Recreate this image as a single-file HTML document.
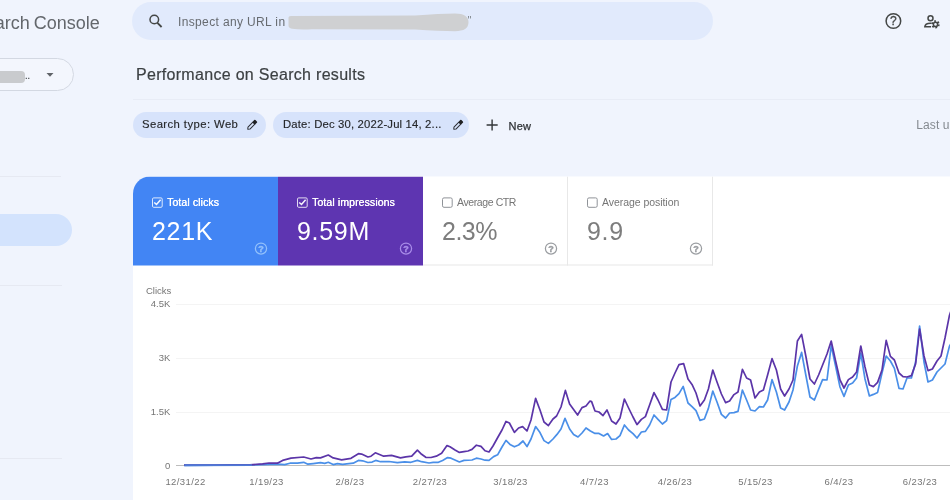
<!DOCTYPE html>
<html lang="en"><head><meta charset="utf-8"><title>Search Console - Performance</title>
<style>
*{box-sizing:border-box;margin:0;padding:0}
html,body{width:950px;height:500px;overflow:hidden}
body{background:#f0f4fd;font-family:"Liberation Sans",sans-serif;position:relative;color:#3c4043}
.abs{position:absolute;white-space:nowrap}
.logo{right:850.2px;top:11px;font-size:18px;line-height:24px;color:#63676c;letter-spacing:0;word-spacing:-1px}
.prop{left:-40px;top:58px;width:114px;height:33px;border:1px solid #d3d8e2;border-radius:16.5px;background:#f3f6fd}
.blob{background:#c9cbce;border-radius:3px;filter:blur(0.6px)}
.search{left:132px;top:2px;width:581px;height:38px;border-radius:19px;background:#e1eafc}
.ph{left:178px;top:13.5px;font-size:12px;line-height:16px;color:#676b70;letter-spacing:0.36px}
.title{left:136px;top:65px;font-size:16px;line-height:20px;color:#3c4043;letter-spacing:0.3px;-webkit-text-stroke:0.2px #3c4043}
.hr{left:133px;top:99px;width:817px;height:1px;background:#e8ecf6}
.chip{top:112px;height:26px;border-radius:13px;background:#d7e3fb;font-size:11.3px;line-height:25px;color:#26282b;padding-left:9px;letter-spacing:0.42px;-webkit-text-stroke:0.15px #26282b}
.new{left:508.5px;top:118.5px;font-size:11px;line-height:14px;color:#2f3236;letter-spacing:0.25px;-webkit-text-stroke:0.25px #2f3236}
.last{left:916.3px;top:117.6px;font-size:12px;line-height:14px;color:#858a90;letter-spacing:0.08px}
.card{left:133px;top:176px;transform:translateY(0.5px);width:830px;height:340px;background:#fff;border-top-left-radius:17px;overflow:hidden}
.tile{position:absolute;top:0;height:88.7px;width:145px}
.t1{left:0;background:#4285f4;color:#fff}
.t2{left:145px;background:#5e35b1;color:#fff}
.t3{left:290px;border-right:1px solid #e8e8e8;border-bottom:1px solid #e8e8e8;color:#757575}
.t4{left:435px;border-right:1px solid #e8e8e8;border-bottom:1px solid #e8e8e8;color:#757575}
.cb{position:absolute;left:19px;top:20px;width:11px;height:11px;border:1px solid #fff;border-radius:2px}
.t3 .cb,.t4 .cb{border-color:#909499}
.lbl{position:absolute;left:34px;top:18.7px;font-size:10.5px;line-height:13px;white-space:nowrap;letter-spacing:0.1px}
.t1 .lbl,.t2 .lbl{font-weight:normal;text-shadow:0.3px 0 0 #fff}
.val{position:absolute;left:19px;top:38.6px;font-size:25px;line-height:30px;white-space:nowrap;letter-spacing:0.7px}
.t3 .val,.t4 .val{color:#7d7d7d}
.hq{position:absolute;left:122px;top:66px;width:13px;height:13px}
svg{position:absolute;left:0;top:0;overflow:visible}
</style></head><body>
<div id="app" style="position:absolute;left:0;top:0;width:950px;height:500px;overflow:hidden;will-change:transform">

<div class="abs logo">Search Console</div>
<div class="abs prop"></div>
<div class="abs blob" style="left:-10px;top:71px;width:35px;height:12px;border-radius:4px"></div>
<div class="abs" style="left:24.800px;top:68px;font-size:11px;line-height:14px;color:#3c4043;letter-spacing:-0.5px">..</div>

<div class="abs" style="left:0;top:176px;width:61px;height:1px;background:#e6e9f2"></div>
<div class="abs" style="left:-20px;top:214px;width:92px;height:32px;border-radius:16px;background:#d3e3fd"></div>
<div class="abs" style="left:0;top:285px;width:62px;height:1px;background:#e6e9f2"></div>
<div class="abs" style="left:0;top:458px;width:62px;height:1px;background:#e6e9f2"></div>

<div class="abs search"></div>
<div class="abs ph">Inspect any URL in</div>
<div class="abs" style="left:467.5px;top:14px;font-size:11px;color:#80868b">"</div>

<div class="abs title">Performance on Search results</div>
<div class="abs hr"></div>

<div class="abs chip" style="left:133px;width:133px">Search type: Web</div>
<div class="abs chip" style="left:273px;width:196px;padding-left:10px;letter-spacing:0.17px">Date: Dec 30, 2022-Jul 14, 2...</div>
<div class="abs new">New</div>
<div class="abs last">Last updated</div>

<div class="abs card">
  <div class="tile t1"><div class="lbl">Total clicks</div><div class="val">221K</div></div>
  <div class="tile t2"><div class="lbl">Total impressions</div><div class="val">9.59M</div></div>
  <div class="tile t3"><div class="lbl" style="letter-spacing:-0.4px">Average CTR</div><div class="val" style="letter-spacing:-0.5px">2.3%</div></div>
  <div class="tile t4"><div class="lbl" style="letter-spacing:-0.05px">Average position</div><div class="val">9.9</div></div>
</div>

<svg width="950" height="500" viewBox="0 0 950 500">
  <path d="M288.500 18 Q288.300 16 291 16 L415 15.600 Q440 13.600 455 13.500 Q468.500 13.500 468.500 22.300 Q468.500 31.200 455 31.200 Q440 31 415 29.500 L312 29.200 Q300 29.800 292 28.800 Q288.300 28.300 288.500 25 Z" fill="#cfd0d2"/>
  <!-- top icons -->
  <g fill="none" stroke="#444746" stroke-width="1.5">
    <circle cx="154.300" cy="19.500" r="4.300"/><path d="M157.400 22.800 L161.600 27" stroke-width="1.800"/>
    <circle cx="893.400" cy="21" r="7.300"/>
  </g>
  <text x="893.400" y="25.200" font-family="Liberation Sans, sans-serif" font-size="12" fill="#444746" stroke="#444746" stroke-width="0.300" text-anchor="middle">?</text>
  <g fill="none" stroke="#444746" stroke-width="1.500">
    <circle cx="930.500" cy="18.300" r="2.500"/>
    <path d="M931.500 23.200 C928 23 925 24.200 924.800 26.800 L931 26.800"/>
  </g>
  <circle cx="935.500" cy="24.400" r="3" fill="none" stroke="#444746" stroke-width="2.400" stroke-dasharray="1.600 1.542"/>
  <circle cx="935.500" cy="24.400" r="2.100" fill="none" stroke="#444746" stroke-width="1.500"/>
  <!-- dropdown triangle -->
  <path d="M46.500 73 L53.500 73 L50 76.800 Z" fill="#5f6368"/>
  <!-- pencils -->
  <g transform="translate(252,125) rotate(-45)">
    <path d="M-6 0 L-4.300 -1.400 H2.600 V1.400 H-4.300 Z" fill="none" stroke="#2a2d33" stroke-width="1" stroke-linejoin="round"/>
    <rect x="2.300" y="-1.900" width="3.600" height="3.800" rx="0.900" fill="#202124"/>
  </g>
  <g transform="translate(458,125) rotate(-45)">
    <path d="M-6 0 L-4.300 -1.400 H2.600 V1.400 H-4.300 Z" fill="none" stroke="#2a2d33" stroke-width="1" stroke-linejoin="round"/>
    <rect x="2.300" y="-1.900" width="3.600" height="3.800" rx="0.900" fill="#202124"/>
  </g>
  <!-- plus -->
  <path d="M492.100 119.400 V130.600 M486.600 125 H497.700" stroke="#333639" stroke-width="1.400" fill="none"/>
  <!-- checkmarks -->
  <g fill="none" stroke-width="1">
    <rect x="152.500" y="197.900" width="9.700" height="9.400" rx="1.200" stroke="#dce9fd"/>
    <rect x="297.500" y="197.900" width="9.700" height="9.400" rx="1.200" stroke="#e3dcf2"/>
    <rect x="442.500" y="197.900" width="9.700" height="9.400" rx="1.500" stroke="#8f9398"/>
    <rect x="587.500" y="197.900" width="9.700" height="9.400" rx="1.500" stroke="#8f9398"/>
  </g>
  <path d="M154.200 202.500 L156.500 204.400 L160.600 199.700" stroke="#f4f8ff" stroke-width="1.500" fill="none"/>
  <path d="M299.200 202.500 L301.500 204.400 L305.600 199.700" stroke="#f6f3fb" stroke-width="1.500" fill="none"/>
  <!-- help icons in tiles -->
  <g fill="none" stroke-width="1.250">
    <circle cx="261" cy="248.600" r="5.600" stroke="#93c1fb"/>
    <circle cx="406" cy="248.600" r="5.600" stroke="#a98de9"/>
    <circle cx="551" cy="248.600" r="5.600" stroke="#9a9da1"/>
    <circle cx="696" cy="248.600" r="5.600" stroke="#9a9da1"/>
  </g>
  <g font-family="Liberation Sans, sans-serif" font-size="9" text-anchor="middle" font-weight="bold">
    <text x="261" y="251.500" fill="#93c1fb" stroke="#93c1fb" stroke-width="0.400">?</text>
    <text x="406" y="251.500" fill="#a98de9" stroke="#a98de9" stroke-width="0.400">?</text>
    <text x="551" y="251.500" fill="#9a9da1" stroke="#9a9da1" stroke-width="0.400">?</text>
    <text x="696" y="251.500" fill="#9a9da1" stroke="#9a9da1" stroke-width="0.400">?</text>
  </g>
  <!-- chart -->
  <g stroke="#f4f4f4" stroke-width="1">
    <path d="M176 304.500 H950 M176 358.500 H950 M176 412.500 H950"/>
  </g>
  <path d="M176 465.500 H950" stroke="#bdbdbd" stroke-width="1"/>
  <g font-family="Liberation Sans, sans-serif" font-size="9.500" fill="#757575">
    <text x="146" y="294">Clicks</text>
    <g text-anchor="end">
      <text x="170.300" y="307.300">4.5K</text>
      <text x="170.300" y="361.300">3K</text>
      <text x="170.300" y="415.300">1.5K</text>
      <text x="170.300" y="468.800">0</text>
    </g>
    <g text-anchor="middle" letter-spacing="0.400">
      <text x="185.500" y="485.300">12/31/22</text>
      <text x="266.500" y="485.300">1/19/23</text>
      <text x="350" y="485.300">2/8/23</text>
      <text x="430" y="485.300">2/27/23</text>
      <text x="510.500" y="485.300">3/18/23</text>
      <text x="594.500" y="485.300">4/7/23</text>
      <text x="675" y="485.300">4/26/23</text>
      <text x="755.500" y="485.300">5/15/23</text>
      <text x="839" y="485.300">6/4/23</text>
      <text x="920" y="485.300">6/23/23</text>
    </g>
  </g>
  <polyline fill="none" stroke="#4a8fe8" stroke-width="1.700" stroke-linejoin="round" points="184.0,465.3 250.0,465.0 277.4,464.2 284.7,464.6 290.0,463.2 297.4,463.2 303.7,462.3 307.9,464.2 313.2,463.6 320.5,462.7 324.7,463.4 328.3,462.3 333.2,464.6 337.4,463.6 342.6,464.4 353.2,463.2 358.4,460.4 362.6,460.8 367.9,462.5 372.1,462.1 375.7,460.4 380.5,461.7 389.0,461.5 397.4,462.7 404.7,461.9 411.0,462.3 417.4,460.4 421.6,461.7 429.0,463.0 433.2,462.3 438.4,462.3 442.6,460.4 447.6,457.6 451.0,458.2 459.4,462.0 464.0,460.4 472.0,460.0 476.4,458.2 481.0,459.0 485.0,460.2 489.0,460.4 493.6,456.6 497.6,454.8 502.0,447.0 506.0,440.4 510.0,444.4 514.4,446.8 518.6,445.0 523.0,441.0 527.0,446.6 531.0,439.0 535.6,426.6 540.0,432.6 544.0,440.6 548.4,443.4 553.0,439.0 557.0,434.4 561.0,429.0 565.0,418.4 569.6,429.0 573.6,434.4 578.0,437.0 582.0,433.0 586.0,428.0 590.4,431.0 595.0,433.4 599.0,433.4 603.6,436.0 607.6,433.6 611.6,439.4 616.0,439.0 620.0,435.6 624.4,425.0 628.6,430.0 633.0,433.6 637.0,438.0 641.4,432.0 645.4,431.4 649.6,425.0 654.0,415.0 658.0,419.4 662.4,424.0 666.6,420.6 671.0,399.4 675.0,397.4 679.0,393.6 683.2,386.4 688.0,403.0 692.0,406.6 696.0,410.6 700.0,420.4 704.4,419.0 708.4,408.4 712.8,391.0 717.0,402.0 721.4,414.4 725.6,418.0 729.6,413.0 734.0,412.6 738.0,411.4 742.4,390.0 746.6,400.0 750.6,410.0 755.0,411.0 759.4,406.6 763.4,407.0 767.6,400.0 772.0,379.6 776.4,392.0 780.6,408.0 784.6,410.0 789.0,402.0 793.0,390.0 797.4,366.0 801.6,352.4 806.0,376.0 810.0,397.0 814.4,400.0 818.6,389.4 822.6,379.6 827.0,380.0 831.2,345.6 835.6,366.0 840.0,387.0 844.0,396.4 848.4,385.0 852.6,383.0 856.6,378.0 860.8,353.0 865.0,379.0 869.4,396.0 873.4,394.4 877.6,392.4 882.0,373.0 886.2,356.0 890.4,361.0 894.4,368.4 899.0,388.4 903.0,389.0 907.0,378.0 911.4,378.0 915.6,362.0 919.6,326.0 924.0,362.0 928.0,382.0 932.4,380.0 937.0,372.0 941.0,368.0 945.0,364.0 949.4,346.4 953.0,340.0"/>
  <polyline fill="none" stroke="#5b35a8" stroke-width="1.700" stroke-linejoin="round" points="184.0,465.0 200.0,465.0 215.0,465.0 230.0,464.9 240.0,464.9 250.0,464.8 262.6,463.8 269.0,463.0 277.4,463.2 282.6,460.4 291.0,458.1 303.7,457.0 311.0,459.0 316.3,457.7 320.5,457.9 328.3,455.0 333.2,457.9 341.6,459.8 351.0,458.3 358.4,453.7 361.6,454.1 367.9,457.0 371.0,456.2 375.3,452.8 383.7,456.2 391.5,455.4 400.5,457.9 405.8,456.8 411.7,456.2 417.4,450.1 421.6,454.3 425.8,457.3 431.0,457.5 436.3,456.2 441.6,453.3 447.0,445.6 450.0,446.8 455.0,450.0 459.4,452.4 464.0,451.6 468.0,451.0 472.0,449.4 476.4,445.2 481.0,446.4 485.0,450.8 489.0,452.0 493.0,446.0 498.0,437.0 502.0,430.0 506.0,421.4 509.4,423.0 514.4,432.4 518.6,428.0 522.6,426.6 527.0,431.0 531.0,420.0 535.6,398.4 540.0,410.0 544.0,422.0 548.4,425.6 553.0,419.0 556.6,416.0 561.0,407.0 565.4,390.4 569.6,404.0 573.6,409.6 577.6,415.0 582.0,407.6 586.0,406.0 590.0,401.0 591.6,401.6 595.0,411.0 599.0,412.0 603.0,415.6 607.0,410.0 611.6,421.0 616.0,424.0 620.0,418.0 624.4,399.0 628.6,408.0 633.0,417.0 637.0,424.6 641.4,419.4 645.4,416.6 649.6,405.0 654.0,392.6 658.0,400.0 662.4,409.4 666.6,410.0 671.0,382.0 675.0,373.0 679.0,364.6 683.6,363.6 688.0,379.0 692.0,384.4 696.0,393.0 700.0,406.0 704.4,400.0 708.4,389.0 712.8,370.0 717.0,382.0 721.4,394.0 725.6,402.6 729.6,401.0 734.0,394.6 738.0,392.0 742.4,369.4 746.6,378.0 750.6,380.0 755.0,398.0 759.4,392.0 763.4,390.0 767.6,375.0 772.0,358.6 776.4,370.0 780.6,389.0 784.6,396.0 789.0,389.0 793.0,380.0 797.4,341.0 801.6,334.4 806.0,357.0 810.0,379.0 814.4,384.0 818.6,375.0 822.6,365.0 827.0,354.0 831.2,341.0 835.6,361.0 840.0,380.0 844.0,388.0 848.4,379.6 852.6,377.0 856.6,372.0 860.8,346.0 865.0,367.0 869.4,385.0 873.4,386.6 877.6,382.4 882.0,370.0 886.2,340.4 890.4,356.4 894.4,360.0 899.0,373.0 903.0,376.6 907.0,377.0 911.4,375.6 915.6,364.0 919.6,329.0 924.0,356.0 928.0,370.6 932.4,369.0 937.0,361.0 941.0,356.0 945.0,338.0 949.4,315.6 953.0,305.0"/>
  <path d="M184.500 465.300 L252 465.100" stroke="#4f7ad6" stroke-width="1.900" fill="none"/>
</svg>
</div>
</body></html>
